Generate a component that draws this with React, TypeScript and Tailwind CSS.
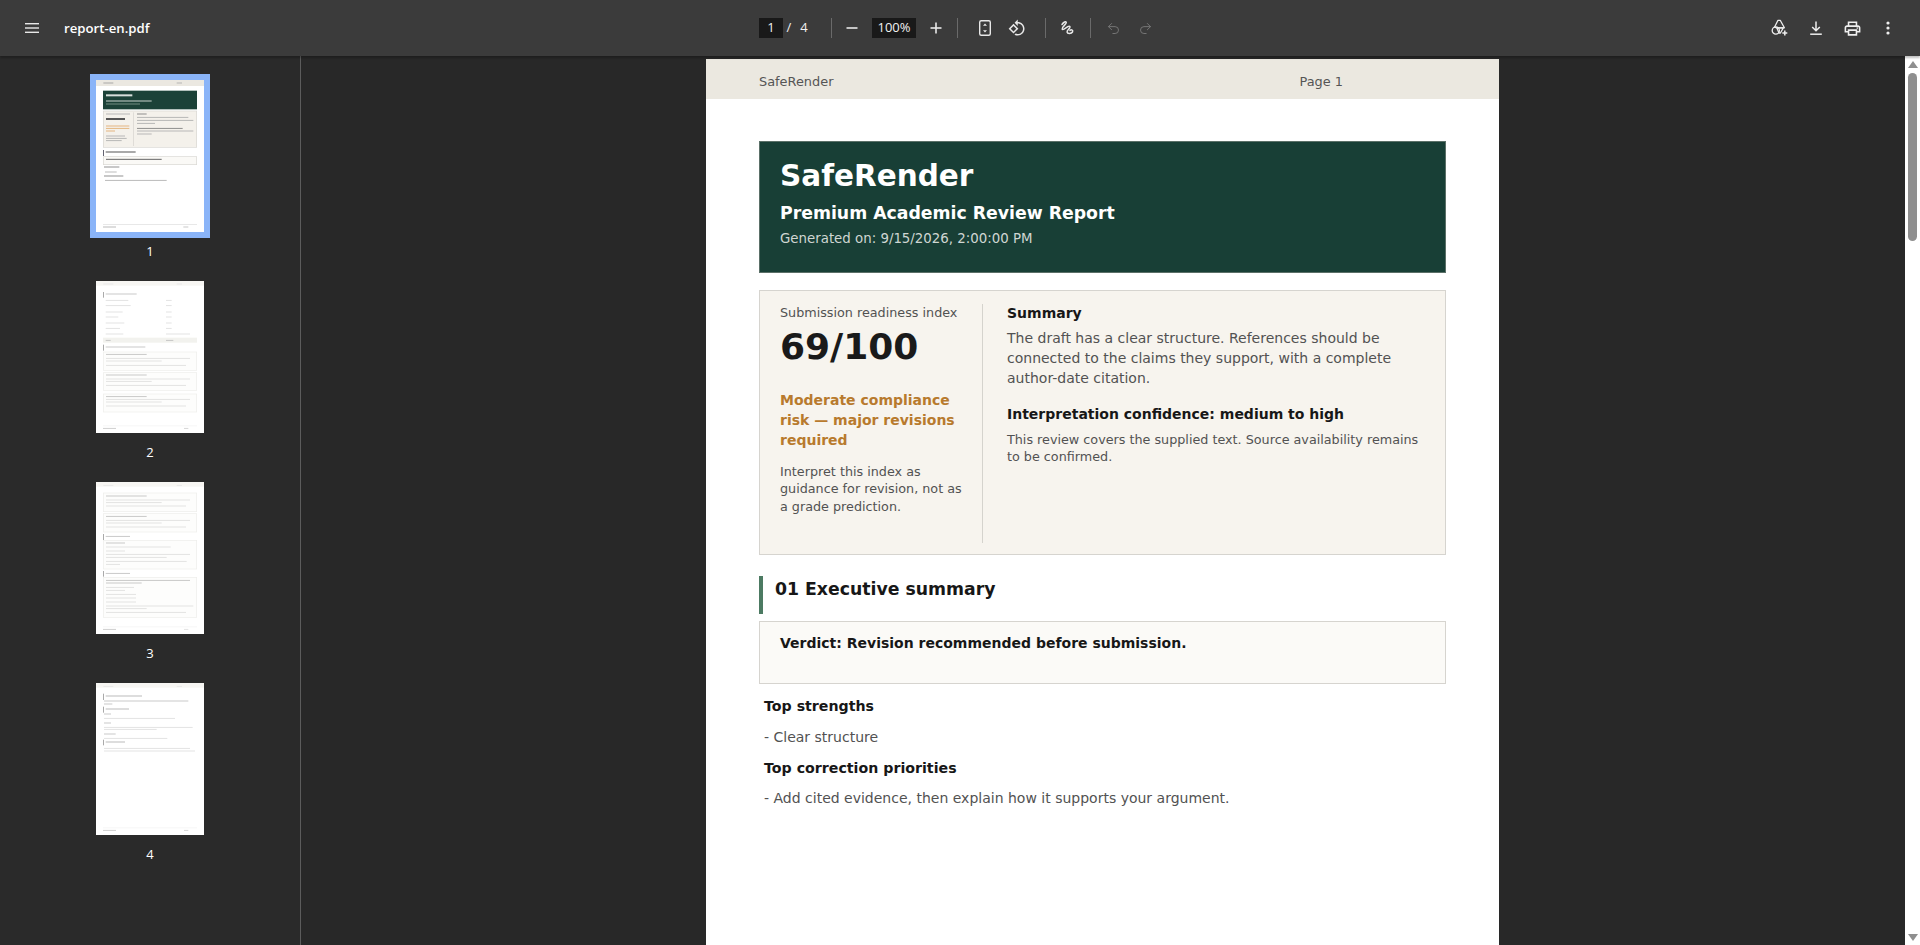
import React from "react";
import { Undo2, Redo2 } from "lucide-react";

type R = [number, number, number, number, string];
const l = (x1: number, x2: number, y: number, c = "#c9c9c9", h = 2.4): R => [x1, y - h / 2, x2 - x1, h, c];

const T1 = "#777", T2 = "#aaa";
const page1: R[] = [
  [48, 30, 324, 18, "#ebe8e1"], l(70, 100, 39, "#999"), l(290, 306, 39, "#aaa"),
  [69, 62, 282, 56, "#1c4238"], l(78, 157, 76, "#d8dfdb", 6), l(78, 215, 93, "#c8d2cc", 3), l(78, 180, 102, "#9fb0a8", 2),
  [69, 122, 282, 111, "#d9d7d2"], [71, 124, 278, 107, "#f4f1eb"], [160, 127, 2, 101, "#d5d3ce"],
  l(78, 150, 132, T2), l(78, 135, 147, "#555", 6), l(78, 148, 168, "#e0a868"), l(78, 148, 175, "#e0a868"), l(78, 105, 183, "#e0a868"),
  l(78, 135, 198, T2), l(78, 140, 205, T2), l(78, 125, 212, T2),
  l(171, 200, 132, T1), l(171, 325, 142, T2), l(171, 340, 151, T2), l(171, 225, 160, T2), l(171, 308, 175, T1), l(171, 340, 183, T2), l(171, 215, 192, T2),
  [69, 240, 2.5, 18, "#445"], l(77, 167, 246, "#555", 3),
  [69, 259, 282, 26, "#d9d7d2"], [71, 261, 278, 22, "#faf9f6"], l(78, 245, 268, "#666", 3),
  l(72, 118, 291, T1), l(75, 110, 306, T2), l(72, 130, 318, T1), l(75, 260, 331, T2),
  [69, 463, 282, 2, "#ddd"], l(69, 108, 471, "#aaa"), l(310, 325, 471, "#bbb"),
];

const P = "#dcdcdc", Q = "#e6e6e6", B = "#eeeeea";
const card = (y1: number, y2: number): R[] => [[69, y1, 282, y2 - y1, B], [71, y1 + 2, 278, y2 - y1 - 4, "#fdfdfc"]];
const page2: R[] = [
  [48, 33, 324, 14, "#f7f6f3"], l(70, 100, 42, Q), l(290, 306, 42, Q),
  [69, 66, 2.5, 17, "#999"], l(77, 170, 72, "#bbb"),
  ...[91, 107, 126, 141, 159, 175, 192].flatMap((y, i): R[] => [l(77, [145, 152, 128, 115, 133, 120, 130][i], y, P), l(258, i === 6 ? 330 : 275, y, P)]),
  [69, 203, 282, 15, "#f2f2ee"], l(77, 92, 211, "#bbb"), l(258, 280, 211, "#bbb"),
  [69, 224, 2.5, 18, "#999"], l(77, 196, 231, "#bbb"),
  ...card(245, 302), l(78, 200, 253, "#bbb"), l(78, 330, 265, P), l(78, 245, 273, P), l(78, 318, 286, P),
  ...card(307, 362), l(78, 200, 315, "#bbb"), l(78, 330, 327, P), l(78, 215, 334, P), l(78, 318, 346, P),
  ...card(371, 427), l(78, 200, 380, "#bbb"), l(78, 330, 388, P), l(78, 245, 396, P), l(78, 318, 408, P),
  [69, 467, 282, 1.5, "#eee"], l(69, 108, 475, "#c4c4c4"), l(312, 325, 475, "#ccc"),
];
const page3: R[] = [
  [48, 36, 324, 14, "#f7f6f3"], l(70, 100, 46, Q), l(290, 306, 46, Q),
  ...card(68, 126), l(78, 200, 78, "#bbb"), l(78, 330, 90, P), l(78, 245, 98, P), l(78, 318, 108, P),
  ...card(130, 187), l(78, 200, 139, "#bbb"), l(78, 330, 151, P), l(78, 245, 159, P), l(78, 318, 171, P),
  [69, 192, 2.5, 18, "#999"], l(77, 150, 199, "#bbb"),
  ...card(210, 298), l(78, 135, 219, "#bbb"), l(78, 272, 231, P), l(78, 135, 243, P), l(78, 330, 253, P), l(78, 260, 262, P), l(78, 320, 274, P), l(78, 120, 283, P),
  [69, 303, 2.5, 17, "#999"], l(77, 150, 310, "#bbb"),
  ...card(321, 443), l(78, 330, 331, "#bbb"), l(78, 185, 339, "#bbb"), l(78, 162, 352, P), l(78, 135, 361, P), l(78, 168, 373, P), l(78, 168, 384, P), l(78, 168, 396, P), l(78, 340, 408, P), l(78, 200, 416, P), l(78, 318, 427, P),
  [69, 470, 282, 1.5, "#eee"], l(69, 108, 478, "#c4c4c4"), l(312, 325, 478, "#ddd"),
];
const page4: R[] = [
  [48, 39, 324, 14, "#f7f6f3"], l(70, 100, 49, Q), l(290, 306, 49, Q),
  [69, 71, 2.5, 19, "#999"], l(77, 186, 78, "#aaa"), l(72, 325, 93, "#bbb"), l(72, 97, 102, "#bbb"),
  [69, 110, 2.5, 18, "#999"], l(77, 147, 117, "#aaa"),
  l(72, 93, 132, "#bbb"), l(72, 285, 145, P), l(72, 93, 159, "#bbb"), l(72, 338, 172, P), l(72, 230, 178, P),
  l(72, 107, 192, "#bbb"), l(72, 262, 205, P),
  [69, 209, 2.5, 17, "#999"], l(77, 135, 216, "#aaa"), l(72, 330, 235, P), l(72, 345, 243, P),
  [69, 473, 282, 1.5, "#eee"], l(69, 108, 481, "#c4c4c4"), l(312, 325, 481, "#ccc"),
];

function Thumb({ n, rects, y0, active }: { n: number; rects: R[]; y0: number; active?: boolean }) {
  return (
    <div className="flex h-[201px] w-[108px] flex-col items-center">
      <svg
        viewBox={`48 ${y0} 324 456`}
        className={`h-[152px] w-[108px] shrink-0 bg-white ${active ? "outline-[6px] outline-solid outline-[#8ab4f8]" : ""}`}
      >
        <defs>
          <filter id={`soft${n}`} x={48} y={y0} width={324} height={456} filterUnits="userSpaceOnUse" primitiveUnits="userSpaceOnUse">
            <feGaussianBlur stdDeviation="1.2" />
          </filter>
        </defs>
        <g filter={`url(#soft${n})`}>
          {rects.map((r, i) => (
            <rect key={i} x={r[0]} y={r[1]} width={r[2]} height={r[3]} fill={r[4]} />
          ))}
        </g>
      </svg>
      <div className="mt-[11px] text-[13px] leading-[16px] text-white">{n}</div>
    </div>
  );
}

function Btn({ children, className = "" }: { children: React.ReactNode; className?: string }) {
  return <div className={`flex h-8 w-8 items-center justify-center text-[#e8e8e8] ${className}`}>{children}</div>;
}
const Sep = ({ className = "" }: { className?: string }) => <div className={`h-5 w-px bg-[#6a6a6a] ${className}`} />;

export default function App() {
  return (
    <div className="flex h-screen w-screen flex-col overflow-hidden bg-[#282828] font-['DejaVu_Sans',sans-serif]">
      <div className="relative z-10 grid h-14 shrink-0 grid-cols-[1fr_402px_1fr] items-center bg-[#3b3b3b] shadow-[0_2px_2px_rgba(0,0,0,0.25)]">
        <div className="flex items-center pl-[16px]">
          <Btn>
            <svg width="14" height="10" viewBox="0 0 14 10" fill="currentColor">
              <rect y="0" width="14" height="1.4" />
              <rect y="4.3" width="14" height="1.4" />
              <rect y="8.6" width="14" height="1.4" />
            </svg>
          </Btn>
          <span className="ml-[16px] pt-px font-['Open_Sans',sans-serif] text-[13.2px] font-semibold text-white">report-en.pdf</span>
        </div>

        <div className="flex items-center font-['Open_Sans',sans-serif] text-[13px] text-[#f1f1f1]">
          <div className="flex h-5 w-6 items-center justify-center bg-[#191919]">1</div>
          <span className="w-3 text-center">/</span>
          <span className="ml-px w-4 text-center">4</span>
          <Sep className="ml-[19px]" />
          <Btn className="ml-1">
            <svg width="12" height="12" viewBox="0 0 12 12"><rect x="0.5" y="5.2" width="11" height="1.6" fill="currentColor" /></svg>
          </Btn>
          <div className="ml-1 flex h-5 w-11 items-center justify-center bg-[#191919]">100%</div>
          <Btn className="ml-1">
            <svg width="12" height="12" viewBox="0 0 12 12" fill="currentColor"><rect x="0.5" y="5.2" width="11" height="1.6" /><rect x="5.2" y="0.5" width="1.6" height="11" /></svg>
          </Btn>
          <Sep className="ml-[5px]" />
          <Btn className="ml-[11px]">
            <svg width="18" height="18" viewBox="0 0 18 18" fill="none">
              <rect x="3.7" y="1.7" width="10.6" height="14.6" rx="1.5" stroke="currentColor" strokeWidth="1.4" />
              <path d="M9 4.6l2 2.2H7zM9 13.4l2-2.2H7z" fill="currentColor" />
            </svg>
          </Btn>
          <Btn>
            <svg width="18" height="18" viewBox="0 0 24 24" fill="currentColor">
              <path d="M7.34 6.41L.86 12.9l6.49 6.48 6.49-6.48-6.5-6.49zM3.69 12.9l3.66-3.66L11 12.9l-3.66 3.66-3.65-3.66zm15.67-6.26C17.61 4.88 15.3 4 13 4V.76L8.76 5 13 9.24V6c1.79 0 3.58.68 4.95 2.05 2.73 2.73 2.73 7.17 0 9.9C16.58 19.32 14.79 20 13 20c-.97 0-1.94-.21-2.84-.61l-1.49 1.49C10.02 21.62 11.51 22 13 22c2.3 0 4.61-.88 6.36-2.64 3.52-3.51 3.52-9.21 0-12.72z" />
            </svg>
          </Btn>
          <Sep className="ml-3" />
          <Btn className="ml-[6px]">
            <svg width="18" height="18" viewBox="0 0 18 18" fill="none" stroke="currentColor" strokeWidth="1.5" strokeLinecap="round" strokeLinejoin="round">
              <path d="M3 5.5C4.5 3.2 7 1.8 7.3 3.4 7.6 5.2 2.8 7.8 3.2 10c.3 1.5 3.5-.9 5.6-2.3 1.6-1 2.8-.2 1.9 1.2-1 1.5-2.8 2.5-2.6 4.2.2 1.6 4.2 1.9 5.4-.1.9-1.6-1-2.9-2.5-1.6" />
            </svg>
          </Btn>
          <Sep className="ml-[6px]" />
          <Btn className="ml-[6px] text-[#757575]"><Undo2 size={15} strokeWidth={1.6} color="#757575" /></Btn>
          <Btn className="text-[#757575]"><Redo2 size={15} strokeWidth={1.6} color="#757575" /></Btn>
        </div>

        <div className="flex items-center justify-end pr-[14px]">
          <div className="flex h-8 w-9 items-center justify-center text-[#eeeeee]">
            <svg width="18" height="18" viewBox="0 0 18 18" fill="none" stroke="currentColor" strokeWidth="1.3" strokeLinejoin="round">
              <path d="M7 1.3h2.2l4.2 7.5H5.7L3.5 8.2z" />
              <circle cx="4.8" cy="11.5" r="3.6" />
              <path d="M5.8 8.8h6.6l-3 5.2H8z" />
              <path d="M13.8 11.5v5M11.3 14h5" strokeWidth="1.5" />
            </svg>
          </div>
          <div className="flex h-8 w-9 items-center justify-center text-[#eeeeee]">
            <svg width="18" height="18" viewBox="0 0 18 18" fill="none" stroke="currentColor" strokeWidth="1.5">
              <path d="M9 2.5v9M5.2 8l3.8 3.8L12.8 8" />
              <path d="M3.2 15.2h11.6" />
            </svg>
          </div>
          <div className="flex h-8 w-9 items-center justify-center text-[#eeeeee]">
            <svg width="19" height="19" viewBox="0 0 24 24" fill="currentColor">
              <path d="M19 8h-1V3H6v5H5c-1.66 0-3 1.34-3 3v6h4v4h12v-4h4v-6c0-1.66-1.34-3-3-3zM8 5h8v3H8V5zm8 12v2H8v-4h8v2zm2-2v-2H6v2H4v-4c0-.55.45-1 1-1h14c.55 0 1 .45 1 1v4h-2z" />
              <circle cx="18" cy="11.5" r="1" />
            </svg>
          </div>
          <div className="flex h-8 w-9 items-center justify-center text-[#eeeeee]">
            <svg width="4" height="14" viewBox="0 0 4 14" fill="currentColor">
              <circle cx="2" cy="2" r="1.6" />
              <circle cx="2" cy="7" r="1.6" />
              <circle cx="2" cy="12" r="1.6" />
            </svg>
          </div>
        </div>
      </div>

      <div className="flex min-h-0 flex-1">
        <div className="flex w-[301px] shrink-0 flex-col items-center border-r border-[#5c5c5c] bg-[#2a2a2a] pt-6 font-['Open_Sans',sans-serif]">
          <Thumb n={1} rects={page1} y0={30} active />
          <Thumb n={2} rects={page2} y0={33} />
          <Thumb n={3} rects={page3} y0={36} />
          <Thumb n={4} rects={page4} y0={39} />
        </div>

        <div className="min-w-0 flex-1 overflow-hidden pl-[405px] pt-[3px]">
          <div className="h-[1124px] w-[793px] bg-white">
            <div className="flex h-10 items-center justify-between bg-[#ebe8e0] pl-[53px] pr-[156px] pt-[5px] text-[12.9px] text-[#555555]">
              <span>SafeRender</span>
              <span>Page 1</span>
            </div>

            <div className="mx-[53px] mt-[42px] h-[132px] border border-[#5b7068] bg-[#183f36] pl-[20px] pt-[15px]">
              <div className="text-[29.5px] font-bold leading-[38px] text-white">SafeRender</div>
              <div className="mt-[7px] text-[17.3px] font-bold leading-[22px] text-white">Premium Academic Review Report</div>
              <div className="mt-[5px] text-[13.35px] leading-[20px] text-[#cfd6d2]">Generated on: 9/15/2026, 2:00:00 PM</div>
            </div>

            <div className="mx-[53px] mt-[17px] flex h-[265px] border-[1.5px] border-[#d6d4cf] bg-[#f7f4ee] pb-[11px] pl-[20px] pt-[12.5px]">
              <div className="w-[203px] shrink-0 border-r border-[#d5d3cd] pr-[16px]">
                <div className="whitespace-nowrap text-[12.75px] leading-[18px] text-[#525252]">Submission readiness index</div>
                <div className="mt-[3px] text-[36px] font-bold leading-[44px] text-[#1a1a1a]">69/100</div>
                <div className="mt-[21px] text-[14px] font-bold leading-[20px] text-[#b87a2d]">Moderate compliance risk — major revisions required</div>
                <div className="mt-[13px] text-[12.75px] leading-[17.5px] text-[#525252]">Interpret this index as guidance for revision, not as a grade prediction.</div>
              </div>
              <div className="min-w-0 flex-1 pl-[24px] pr-[22px]">
                <div className="text-[14px] font-bold leading-[18px] text-[#171717]">Summary</div>
                <div className="mt-[6px] text-[14px] leading-[20px] text-[#525252]">The draft has a clear structure. References should be connected to the claims they support, with a complete author-date citation.</div>
                <div className="mt-[17px] text-[14px] font-bold leading-[18px] text-[#171717]">Interpretation confidence: medium to high</div>
                <div className="mt-[8px] text-[12.75px] leading-[17.5px] text-[#525252]">This review covers the supplied text. Source availability remains to be confirmed.</div>
              </div>
            </div>

            <div className="mx-[53px] mt-[21px] h-[38px] border-l-4 border-[#4c7a62] pl-[12px] pt-[1px] text-[17.3px] font-bold leading-[24px] text-[#171717]">01 Executive summary</div>

            <div className="mx-[53px] mt-[7px] h-[63px] border border-[#d6d4cf] bg-[#fbfaf7] pl-[20px] pt-[11px] text-[14px] font-bold leading-[20px] text-[#171717]">Verdict: Revision recommended before submission.</div>

            <div className="ml-[58px] mt-[12px] text-[14.2px] font-bold leading-[20px] text-[#171717]">Top strengths</div>
            <div className="ml-[58px] mt-[11px] text-[14px] leading-[20px] text-[#525252]">- Clear structure</div>
            <div className="ml-[58px] mt-[11px] text-[14.2px] font-bold leading-[20px] text-[#171717]">Top correction priorities</div>
            <div className="ml-[58px] mt-[10px] text-[14px] leading-[20px] text-[#525252]">- Add cited evidence, then explain how it supports your argument.</div>
          </div>
        </div>

        <div className="flex w-[15px] shrink-0 flex-col items-center bg-white pb-[4px] pt-[5px]">
          <svg width="10" height="7" viewBox="0 0 10 7" className="shrink-0"><path d="M5 0l5 7H0z" fill="#8f8f8f" /></svg>
          <div className="mt-[5px] h-[168px] w-[9px] shrink-0 rounded-[5px] bg-[#8f8f8f]" />
          <div className="flex-1" />
          <svg width="10" height="7" viewBox="0 0 10 7" className="shrink-0"><path d="M5 7l5-7H0z" fill="#8f8f8f" /></svg>
        </div>
      </div>
    </div>
  );
}
